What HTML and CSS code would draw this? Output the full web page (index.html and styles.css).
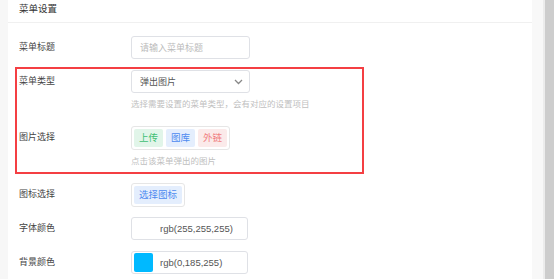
FILE: index.html
```html
<!DOCTYPE html>
<html lang="zh">
  <head>
    <meta charset="UTF-8" />
    <title>菜单设置</title>
    <link rel="stylesheet" href="styles.css">
  </head>
  <body>
    <div class="page">
      <div class="gutter-left"></div>
      <div class="panel">
        <div class="head">菜单设置</div>

        <div class="row first">
          <label>菜单标题</label>
          <div class="input"><span class="placeholder">请输入菜单标题</span></div>
        </div>

        <div class="marked">
          <div class="row">
            <label>菜单类型</label>
            <div class="input select">
              <span>弹出图片</span>
              <svg width="9" height="6" viewBox="0 0 9 6"><path d="M1 1l3.5 3.5L8 1" fill="none" stroke="#888" stroke-width="1.3"/></svg>
            </div>
          </div>
          <div class="help">选择需要设置的菜单类型，会有对应的设置项目</div>

          <div class="row pics">
            <label>图片选择</label>
            <div class="group">
              <span class="btn green">上传</span>
              <span class="btn blue">图库</span>
              <span class="btn red">外链</span>
            </div>
          </div>
          <div class="help">点击该菜单弹出的图片</div>
        </div>

        <div class="row icon-row">
          <label>图标选择</label>
          <div class="group">
            <span class="btn blue wide">选择图标</span>
          </div>
        </div>

        <div class="row color-row">
          <label>字体颜色</label>
          <div class="input color">
            <span class="swatch white"></span>
            <span>rgb(255,255,255)</span>
          </div>
        </div>

        <div class="row color-row last">
          <label>背景颜色</label>
          <div class="input color">
            <span class="swatch sky"></span>
            <span>rgb(0,185,255)</span>
          </div>
        </div>
      </div>
      <div class="gutter-right"></div>
      <div class="scrollbar"></div>
    </div>
  </body>
</html>
```

FILE: styles.css
```css
html, body {
  margin: 0;
  padding: 0;
  background: #fff;
}
body {
  font-family: "Liberation Sans", "Noto Sans CJK SC", sans-serif;
  font-size: 9px;
  color: #555;
}
.page {
  display: flex;
  width: 554px;
  height: 279px;
  overflow: hidden;
}
.gutter-left {
  width: 8px;
  background: #f7f7f7;
}
.panel {
  flex: 1;
  background: #fff;
}
.gutter-right {
  width: 11px;
  background: #f8f8f8;
}
.scrollbar {
  width: 9px;
  background: #cdcdcd;
  border-left: 2px solid #ececec;
}
.head {
  height: 22px;
  line-height: 17px;
  padding-left: 11px;
  font-size: 9.5px;
  color: #333;
  border-bottom: 1px solid #f0f0f0;
}
.row {
  display: flex;
  align-items: flex-start;
  padding-left: 11px;
}
.row label {
  width: 112px;
  line-height: 23px;
  color: #444;
}
.row.first {
  margin-top: 13px;
}
.input {
  box-sizing: border-box;
  width: 119px;
  height: 23px;
  border: 1px solid #dfe1e6;
  border-radius: 3px;
  padding: 0 8px;
  display: flex;
  align-items: center;
  color: #555;
}
.placeholder {
  color: #bbb;
}
.select {
  justify-content: space-between;
  padding-right: 6px;
}
.marked {
  margin: 8px 0 0 7px;
  width: 349px;
  box-sizing: border-box;
  border: 2px solid #f43f43;
  padding: 1px 0 5px 0;
}
.marked .row {
  padding-left: 2px;
}
.help {
  margin: 5px 0 0 114px;
  line-height: 12px;
  font-size: 8.5px;
  color: #c0c0c0;
}
.row.pics {
  margin-top: 16px;
}
.group {
  display: flex;
  gap: 3px;
  padding: 2px;
  border: 1px solid #e6e6e6;
  border-radius: 3px;
}
.btn {
  width: 29px;
  height: 18px;
  line-height: 18px;
  text-align: center;
  border-radius: 2px;
  font-size: 9.5px;
}
.btn.wide {
  width: 48px;
}
.green {
  background: #e1f5e9;
  color: #3fbf73;
}
.blue {
  background: #e4eefd;
  color: #4d8af0;
}
.red {
  background: #fbeaea;
  color: #f08080;
}
.icon-row {
  margin-top: 9px;
}
.color-row {
  margin-top: 10px;
}
.color-row.last {
  margin-top: 11px;
}
.color {
  width: 117px;
  padding: 0 0 0 2px;
  gap: 7px;
  font-size: 9.5px;
  color: #555;
}
.swatch {
  width: 19px;
  height: 19px;
  border-radius: 2px;
}
.swatch.white {
  background: #fff;
}
.swatch.sky {
  background: #00b9ff;
}
```
